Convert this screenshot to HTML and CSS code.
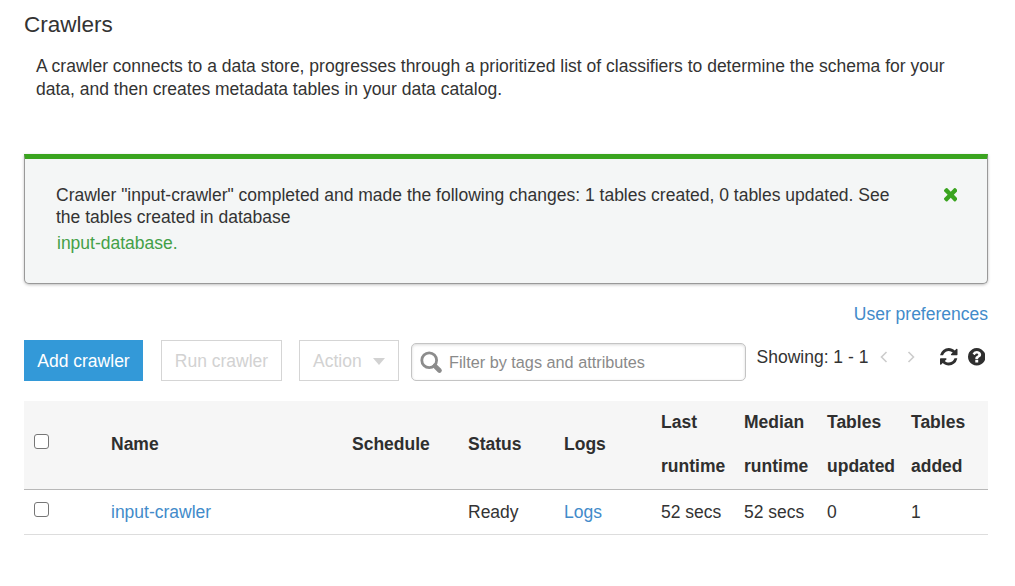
FILE: index.html
```html
<!DOCTYPE html>
<html lang="en">
<head>
<meta charset="utf-8">
<title>Crawlers</title>
<link rel="stylesheet" href="styles.css">
</head>
<body>
<main class="page">
  <h1 class="title">Crawlers</h1>
  <p class="intro">A crawler connects to a data store, progresses through a prioritized list of classifiers to determine the schema for your<br>data, and then creates metadata tables in your data catalog.</p>

  <section class="alert">
    <div class="alert-body">
      <p class="alert-text">Crawler "input-crawler" completed and made the following changes: 1 tables created, 0 tables updated. See<br>the tables created in database</p>
      <a class="alert-link">input-database.</a>
    </div>
    <svg class="alert-close" viewBox="302 366 1188 1188"><path d="M1490 1322q0 40-28 68l-136 136q-28 28-68 28t-68-28l-294-294-294 294q-28 28-68 28t-68-28l-136-136q-28-28-28-68t28-68l294-294-294-294q-28-28-28-68t28-68l136-136q28-28 68-28t68 28l294 294 294-294q28-28 68-28t68 28l136 136q28 28 28 68t-28 68l-294 294 294 294q28 28 28 68z"/></svg>
  </section>

  <div class="prefs"><a class="link">User preferences</a></div>

  <div class="toolbar">
    <button class="btn btn-primary">Add crawler</button>
    <button class="btn btn-run">Run crawler</button>
    <button class="btn btn-action">Action<span class="caret"></span></button>
    <div class="search">
      <svg class="search-icon" viewBox="0 0 23 23"><circle cx="9.2" cy="9.2" r="7.4" fill="none" stroke="#8c8c8c" stroke-width="2.8"/><path d="M14.8 14.8L19.500 19.500" stroke="#8c8c8c" stroke-width="4.600" stroke-linecap="round"/></svg>
      <span class="placeholder">Filter by tags and attributes</span>
    </div>
    <div class="status">
      <span class="showing">Showing: 1 - 1</span>
      <svg class="chev" viewBox="0 0 8 12"><path d="M6.5 1L1.5 6l5 5"/></svg>
      <svg class="chev chev-next" viewBox="0 0 8 12"><path d="M1.5 1l5 5-5 5"/></svg>
      <svg class="icon" viewBox="0 0 1536 1536"><path d="M1511 928q0 5-1 7-64 268-268 434.500t-478 166.500q-146 0-282.500-55t-243.500-157l-129 129q-19 19-45 19t-45-19-19-45v-448q0-26 19-45t45-19h448q26 0 45 19t19 45-19 45l-137 137q71 66 161 102t187 36q134 0 250-65t186-179q11-17 53-117 8-23 30-23h192q13 0 22.500 9.500t9.500 22.500zm25-800v448q0 26-19 45t-45 19h-448q-26 0-45-19t-19-45 19-45l138-138q-148-137-349-137-134 0-250 65t-186 179q-11 17-53 117-8 23-30 23h-199q-13 0-22.500-9.500t-9.500-22.500v-7q65-268 270-434.500t480-166.500q146 0 284 55.500t245 156.500l130-129q19-19 45-19t45 19 19 45z"/></svg>
      <svg class="icon icon-help" viewBox="128 128 1536 1536"><path d="M1024 1376v-192q0-14-9-23t-23-9h-192q-14 0-23 9t-9 23v192q0 14 9 23t23 9h192q14 0 23-9t9-23zm256-672q0-88-55.500-163t-138.500-116-170-41q-243 0-371 213-15 24 8 42l132 100q7 6 19 6 16 0 25-12 53-68 86-92 34-24 86-24 48 0 85.500 26t37.500 59q0 38-20 61t-68 45q-63 28-115.500 86.500t-52.500 125.500v36q0 14 9 23t23 9h192q14 0 23-9t9-23q0-19 21.500-49.500t54.500-49.500q32-18 49-28.500t46-35 44.500-48 28-60.500 12.500-81zm384 192q0 209-103 385.500t-279.500 279.500-385.500 103-385.500-103-279.500-279.500-103-385.500 103-385.500 279.500-279.500 385.500-103 385.500 103 279.500 279.500 103 385.500z"/></svg>
    </div>
  </div>

  <div class="table">
    <div class="row head">
      <span><i class="check"></i></span>
      <span>Name</span>
      <span>Schedule</span>
      <span>Status</span>
      <span>Logs</span>
      <span>Last<br>runtime</span>
      <span>Median<br>runtime</span>
      <span>Tables<br>updated</span>
      <span>Tables<br>added</span>
    </div>
    <div class="row item">
      <span><i class="check"></i></span>
      <span><a class="link">input-crawler</a></span>
      <span></span>
      <span>Ready</span>
      <span><a class="link">Logs</a></span>
      <span>52 secs</span>
      <span>52 secs</span>
      <span>0</span>
      <span>1</span>
    </div>
  </div>
</main>
</body>
</html>
```
FILE: styles.css
```css
* { box-sizing: border-box; }
body {
  margin: 0;
  background: #fff;
  color: #333;
  font-family: "Liberation Sans", Arial, sans-serif;
  font-size: 17.5px;
  white-space: nowrap;
}
.page { width: 964px; margin-left: 24px; }
.title { margin: 0; padding-top: 11px; font-size: 22.5px; font-weight: 400; line-height: 28px; }
.intro { margin: 16px 0 0 12px; line-height: 23px; font-size: 17.5px; }
.link { color: #428bca; }
.alert {
  display: flex;
  justify-content: space-between;
  height: 130px;
  margin-top: 53px;
  padding: 25px 30px 0 31px;
  background: #f4f6f6;
  border: 1px solid #999;
  border-top: 5px solid #3aa41f;
  border-radius: 0 0 5px 5px;
  box-shadow: 0 1px 3px rgba(0, 0, 0, .25);
}
.alert-text { margin: 0; line-height: 22px; }
.alert-link { display: block; margin: 4px 0 0 1px; line-height: 22px; color: #43a047; }
.alert-close { width: 13.5px; height: 13.5px; margin-top: 4px; fill: #3aa41f; }
.prefs { margin-top: 19px; text-align: right; line-height: 22px; }
.toolbar { display: flex; height: 41px; margin-top: 15px; }
.btn {
  height: 41px;
  padding: 2px 0 0;
  font: inherit;
  background: #fff;
  border: 1px solid #d5d5d5;
  color: #d2d2d2;
}
.btn-primary { width: 119px; background: #3399d8; border-color: #3399d8; color: #fff; }
.btn-run { width: 121px; margin-left: 18px; }
.btn-action { display: flex; align-items: center; width: 100px; margin-left: 17px; padding-left: 13px; }
.caret { margin-left: 11px; border: 6px solid transparent; border-top: 7px solid #d2d2d2; border-bottom: 0; }
.search {
  display: flex;
  align-items: center;
  width: 335px;
  height: 38px;
  margin: 3px 0 0 12px;
  padding-left: 8px;
  border: 1px solid #c4c4c4;
  border-radius: 5px;
  box-shadow: inset 0 1px 3px rgba(0, 0, 0, .15);
}
.search-icon { width: 23px; height: 23px; }
.placeholder { margin-left: 6px; color: #8a8a8a; font-size: 16.25px; }
.status { display: flex; align-items: center; height: 22px; margin: 6px 0 0 10.5px; }
.showing { width: 113px; }
.chev { width: 8px; height: 12px; margin-left: 10px; fill: none; stroke: #ccc; stroke-width: 1.6; }
.chev-next { margin-left: 19px; }
.icon { width: 17.5px; height: 17.5px; margin-left: 25.5px; fill: #2f2f2f; }
.icon-help { margin-left: 10px; }
.table { margin-top: 20px; }
.row {
  display: grid;
  grid-template-columns: 87px 241px 116px 96px 97px 83px 83px 84px 1fr;
  align-items: center;
}
.head {
  height: 89px;
  background: #f6f6f6;
  border-bottom: 1px solid #b8b8b8;
  font-weight: 700;
  line-height: 44px;
  color: #2f2f2f;
}
.head > span { margin: -1px 0 1px; }
.item { height: 45px; border-bottom: 1px solid #ddd; line-height: 44px; }
.check {
  display: block;
  width: 15px;
  height: 15px;
  margin: 0 0 5px 10px;
  background: #fff;
  border: 1px solid #767676;
  border-radius: 3px;
}
```
